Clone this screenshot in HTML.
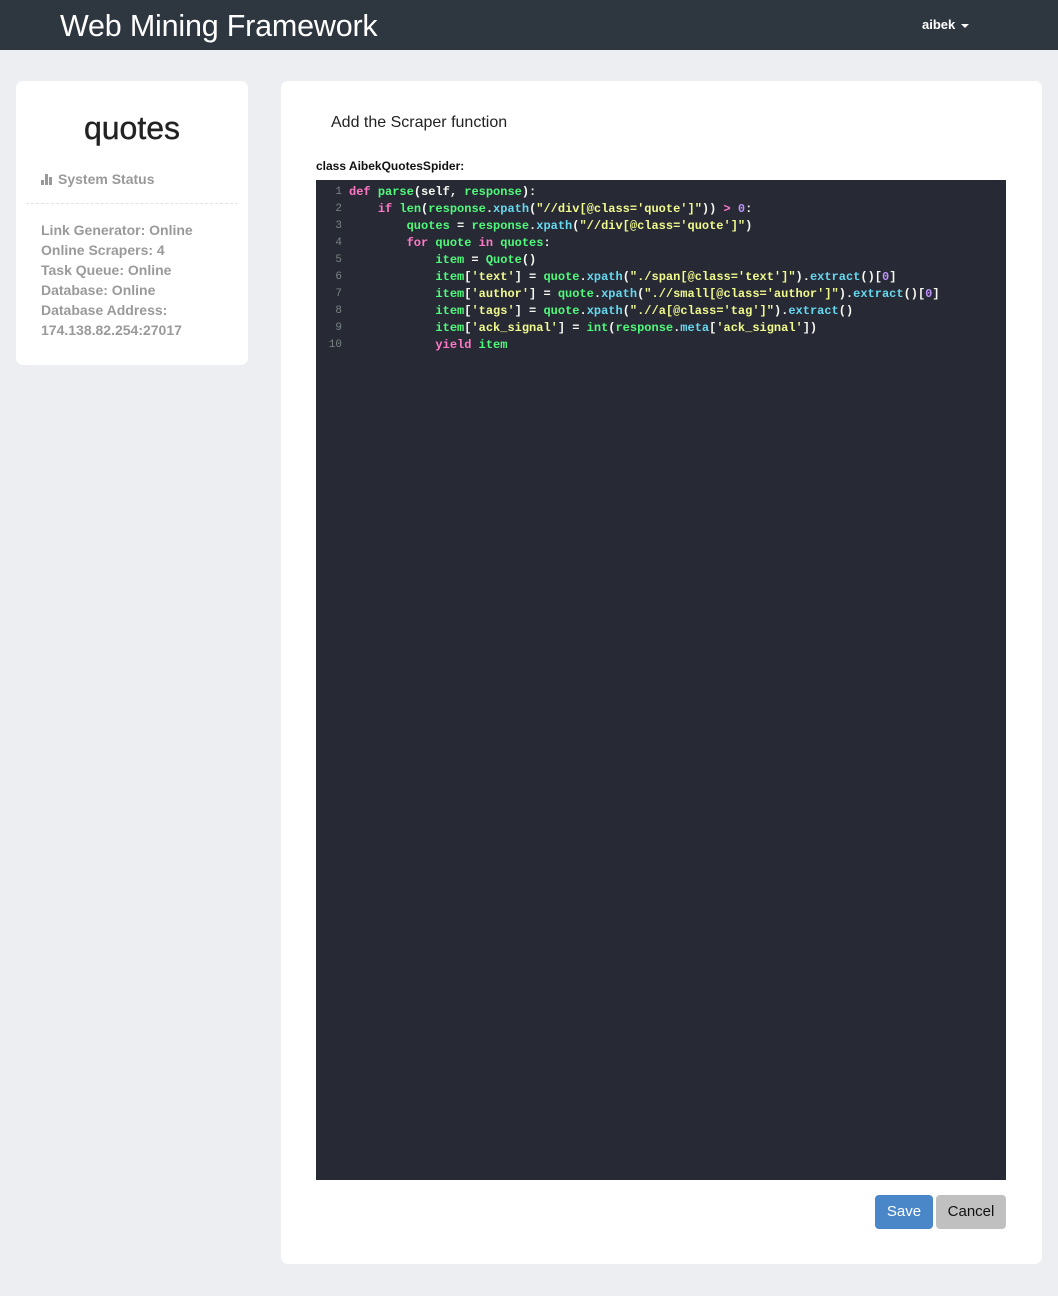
<!DOCTYPE html>
<html><head><meta charset="utf-8">
<style>
*{box-sizing:border-box;margin:0;padding:0}
body{width:1058px;height:1296px;background:#edeef1;font-family:"Liberation Sans",Arial,sans-serif;position:relative;overflow:hidden}
.nav{position:absolute;left:0;top:0;width:1058px;height:50px;background:#2e3640}
.brand{position:absolute;left:60px;top:9px;color:#fff;font-size:30.5px;letter-spacing:-0.2px}
.user{position:absolute;left:922px;top:17px;color:#fff;font-size:13px;font-weight:bold}
.caret{display:inline-block;margin-left:6px;width:0;height:0;border-left:4px solid transparent;border-right:4px solid transparent;border-top:4px solid #fff;vertical-align:middle}
.side{position:absolute;left:16px;top:81px;width:232px;height:284px;background:#fff;border-radius:7px}
.side h1{position:absolute;left:0;width:232px;top:29px;text-align:center;font-size:32px;font-weight:500;color:#222;-webkit-text-stroke:0.4px #222}
.ss{position:absolute;left:25px;top:90px;font-size:14px;font-weight:bold;color:#999}
.bars{display:inline-block;width:13px;height:11px;position:relative;margin-right:4px;vertical-align:-1px}
.bars i{position:absolute;bottom:0;width:3px;background:#999}
.hr{position:absolute;left:10px;right:10px;top:122px;border-top:1px dashed #e3e3e3}
.stat{position:absolute;left:25px;top:139px;font-size:14px;font-weight:bold;color:#9a9a9a;line-height:20px}
.main{position:absolute;left:281px;top:81px;width:761px;height:1183px;background:#fff;border-radius:7px}
.title{position:absolute;left:50px;top:33px;font-size:16px;color:#222}
.cls{position:absolute;left:35px;top:78px;font-size:12px;font-weight:bold;color:#111}
.code{position:absolute;left:35px;top:99px;width:690px;height:1000px;background:#272935}
pre{position:absolute;left:0;top:4px;font-family:"Liberation Mono","DejaVu Sans Mono",monospace;font-size:12px;line-height:17px;color:#f8f8f2;font-weight:bold}
pre div{height:17px;line-height:17px;white-space:pre}
.ln{display:inline-block;width:26px;text-align:right;color:#7a8585;margin-right:7px;font-weight:normal;font-size:11px;line-height:17px;vertical-align:top}
.k{color:#ff79c6}.g{color:#50fa7b}.c{color:#66d9ef}.s{color:#f1fa8c}.n{color:#bd93f9}
.btn{position:absolute;top:1114px;height:34px;border-radius:4px;font-size:15px;line-height:34px;text-align:center}
.save{left:594px;width:58px;background:#4a87c8;color:#fff}
.cancel{left:655px;width:70px;background:#c0c0c0;color:#111}
</style></head><body>
<div class="nav"><div class="brand">Web Mining Framework</div><div class="user">aibek<span class="caret"></span></div></div>
<div class="side">
<h1>quotes</h1>
<div class="ss"><span class="bars"><i style="left:0;height:5px"></i><i style="left:4px;height:11px"></i><i style="left:8px;height:8px"></i></span>System Status</div>
<div class="hr"></div>
<div class="stat">Link Generator: Online<br>Online Scrapers: 4<br>Task Queue: Online<br>Database: Online<br>Database Address:<br>174.138.82.254:27017</div>
</div>
<div class="main">
<div class="title">Add the Scraper function</div>
<div class="cls">class AibekQuotesSpider:</div>
<div class="code"><pre><div><span class="ln">1</span><span class="k">def</span> <span class="g">parse</span>(self, <span class="g">response</span>):</div><div><span class="ln">2</span>    <span class="k">if</span> <span class="g">len</span>(<span class="g">response</span>.<span class="c">xpath</span>(<span class="s">"//div[@class='quote']"</span>)) <span class="k">&gt;</span> <span class="n">0</span>:</div><div><span class="ln">3</span>        <span class="g">quotes</span> = <span class="g">response</span>.<span class="c">xpath</span>(<span class="s">"//div[@class='quote']"</span>)</div><div><span class="ln">4</span>        <span class="k">for</span> <span class="g">quote</span> <span class="k">in</span> <span class="g">quotes</span>:</div><div><span class="ln">5</span>            <span class="g">item</span> = <span class="g">Quote</span>()</div><div><span class="ln">6</span>            <span class="g">item</span>[<span class="s">'text'</span>] = <span class="g">quote</span>.<span class="c">xpath</span>(<span class="s">"./span[@class='text']"</span>).<span class="c">extract</span>()[<span class="n">0</span>]</div><div><span class="ln">7</span>            <span class="g">item</span>[<span class="s">'author'</span>] = <span class="g">quote</span>.<span class="c">xpath</span>(<span class="s">".//small[@class='author']"</span>).<span class="c">extract</span>()[<span class="n">0</span>]</div><div><span class="ln">8</span>            <span class="g">item</span>[<span class="s">'tags'</span>] = <span class="g">quote</span>.<span class="c">xpath</span>(<span class="s">".//a[@class='tag']"</span>).<span class="c">extract</span>()</div><div><span class="ln">9</span>            <span class="g">item</span>[<span class="s">'ack_signal'</span>] = <span class="g">int</span>(<span class="g">response</span>.<span class="c">meta</span>[<span class="s">'ack_signal'</span>])</div><div><span class="ln">10</span>            <span class="k">yield</span> <span class="g">item</span></div></pre></div>
<div class="btn save">Save</div>
<div class="btn cancel">Cancel</div>
</div>
</body></html>
